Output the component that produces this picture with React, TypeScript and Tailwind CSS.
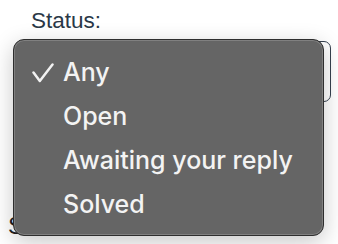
const items = ["Any", "Open", "Awaiting your reply", "Solved"];

function Check() {
  return (
    <svg width="23" height="21" viewBox="0 0 23 21" className="absolute left-[18px] top-[13px]">
      <path d="M1.5 9.5 L7.8 18 L20.5 1.5" fill="none" stroke="#f2f2f2" strokeWidth="2.5" strokeLinecap="round" strokeLinejoin="round" />
    </svg>
  );
}

export default function App() {
  return (
    <div className="relative w-[338px] h-[244px] overflow-hidden bg-white font-['Liberation_Sans',Arial,sans-serif]">
      <div className="flex flex-col pt-[8px]">
        <p className="ml-[31px] text-[22.5px] leading-[26px] text-[#2a3847]">Status:</p>
        <div className="ml-[31px] mt-[7px] w-[300px] h-[61px] rounded-[7px] border border-[#36414f] bg-white"></div>
        <p className="ml-[8px] mt-[110px] text-[24px] leading-[28px] text-[#1f1f1f]">Search:</p>
      </div>

      <div className="absolute left-[13px] top-[39px] w-[311px] h-[197px] rounded-[11px] border border-[#2e2e2e] bg-[#656565] shadow-[0_6px_22px_rgba(0,0,0,0.22),inset_0_0_0_1px_rgba(255,255,255,0.18)] pt-[10px] font-['Inter',sans-serif]">
        {items.map((it, i) => (
          <div key={it} className="relative pl-[49px] text-[25px] font-[450] leading-[44px] text-[#f3f3f3]">
            {i === 0 && <Check />}
            {it}
          </div>
        ))}
      </div>
    </div>
  );
}
